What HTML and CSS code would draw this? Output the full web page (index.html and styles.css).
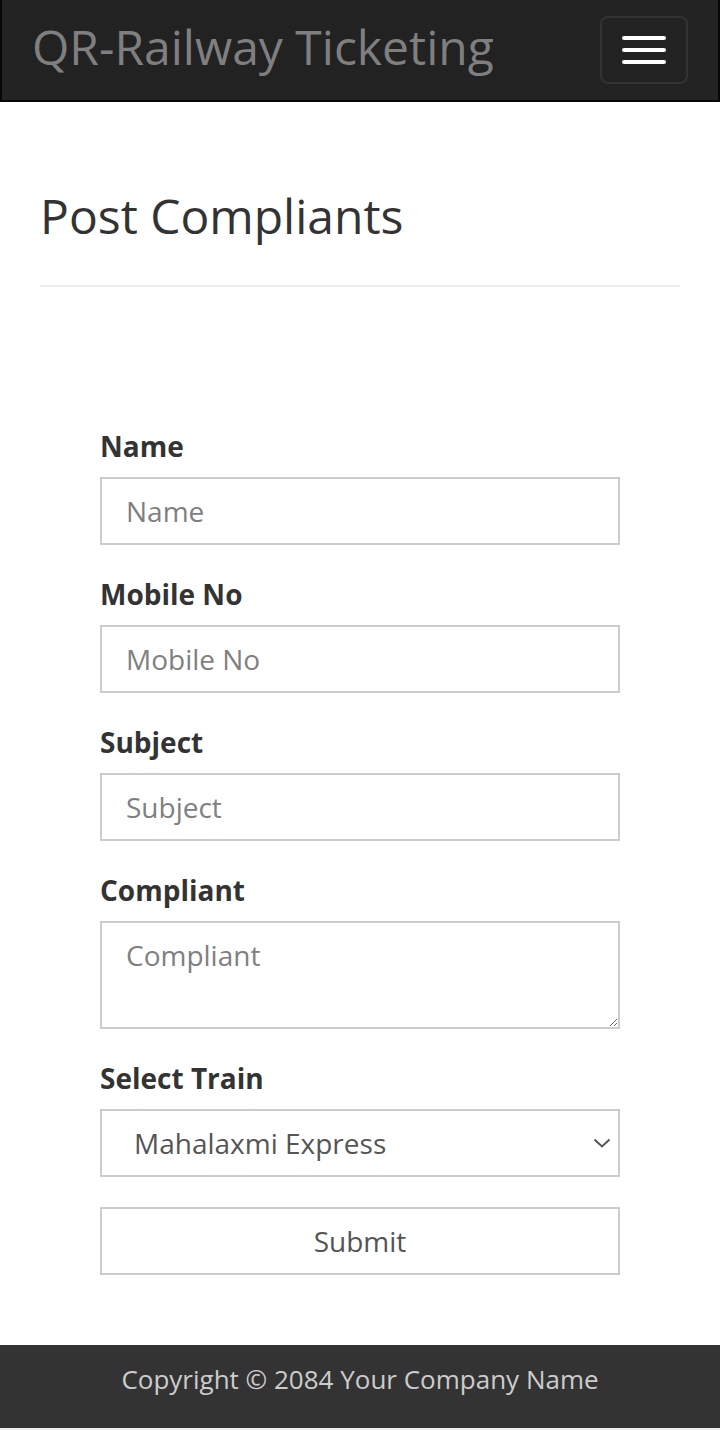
FILE: index.html
```html
<!DOCTYPE html>
<html lang="en">
<head>
<meta charset="utf-8">
<title>Post Compliants</title>
<link rel="stylesheet" href="styles.css">
</head>
<body>
<nav class="navbar">
  <a class="brand" href="#">QR-Railway Ticketing</a>
  <button class="toggle" type="button" aria-label="Toggle navigation">
    <span class="bar"></span>
    <span class="bar"></span>
    <span class="bar"></span>
  </button>
</nav>
<main class="container">
  <h1 class="page-header">Post Compliants</h1>
  <form class="form">
    <div class="group">
      <label class="label" for="name">Name</label>
      <input class="control" id="name" type="text" placeholder="Name">
    </div>
    <div class="group">
      <label class="label" for="mobile">Mobile No</label>
      <input class="control" id="mobile" type="text" placeholder="Mobile No">
    </div>
    <div class="group">
      <label class="label" for="subject">Subject</label>
      <input class="control" id="subject" type="text" placeholder="Subject">
    </div>
    <div class="group">
      <label class="label" for="compliant">Compliant</label>
      <textarea class="control area" id="compliant" placeholder="Compliant"></textarea>
    </div>
    <div class="group">
      <label class="label" for="train">Select Train</label>
      <select class="control select" id="train">
        <option>Mahalaxmi Express</option>
      </select>
    </div>
    <button class="submit" type="button">Submit</button>
  </form>
</main>
<footer class="footer">Copyright © 2084 Your Company Name</footer>
<div class="strip"></div>
</body>
</html>
```
FILE: styles.css
```css
* { box-sizing: border-box; }
html, body { margin: 0; padding: 0; background: #fff; }
body {
  font-family: "Open Sans", "DejaVu Sans", sans-serif;
  color: #333;
  width: 720px;
}
.navbar {
  height: 102px;
  background: #222;
  border: 2px solid #080808;
  border-top: 0;
  display: flex;
  align-items: flex-start;
  justify-content: space-between;
}
.brand {
  font-size: 48px;
  line-height: 50px;
  padding: 22px 0 0 30px;
  color: #7f7f7f;
  text-decoration: none;
  white-space: nowrap;
}
.toggle {
  margin: 16px 30px 0 0;
  width: 88px;
  height: 68px;
  padding: 18px 20px;
  background: transparent;
  border: 2px solid #333;
  border-radius: 8px;
  display: flex;
  flex-direction: column;
  gap: 8px;
}
.bar {
  display: block;
  width: 44px;
  height: 4px;
  border-radius: 2px;
  background: #fff;
}
.container { padding: 0 40px; }
.page-header {
  margin: 86px 0 0;
  font-size: 48px;
  line-height: 56px;
  font-weight: 400;
  color: #333;
  padding-bottom: 41px;
  border-bottom: 2px solid #eee;
}
.form {
  margin: 140px 60px 0;
  display: flex;
  flex-direction: column;
}
.group {
  display: flex;
  flex-direction: column;
  margin-bottom: 30px;
}
.label {
  font-size: 28px;
  line-height: 38px;
  font-weight: 700;
  color: #333;
  margin-bottom: 12px;
}
.control {
  display: block;
  width: 100%;
  height: 68px;
  padding: 0 24px;
  font-family: inherit;
  font-size: 28px;
  color: #555;
  background: #fff;
  border: 2px solid #ccc;
  border-radius: 0;
  outline: none;
}
.control::placeholder { color: #808080; opacity: 1; }
.area {
  height: 108px;
  padding-top: 12px;
  line-height: 40px;
  resize: vertical;
}
.select {
  appearance: none;
  -webkit-appearance: none;
  padding-left: 32px;
  background-image: url("data:image/svg+xml;utf8,<svg xmlns='http://www.w3.org/2000/svg' width='18' height='12' viewBox='0 0 18 12'><path d='M1.5 2.5 L9 9.5 L16.5 2.5' fill='none' stroke='%23555' stroke-width='2'/></svg>");
  background-repeat: no-repeat;
  background-position: right 7px center;
}
.submit {
  height: 68px;
  width: 100%;
  font-family: inherit;
  font-size: 28px;
  color: #555;
  background: #fff;
  border: 2px solid #ccc;
  border-radius: 0;
  margin-bottom: 70px;
}
.footer {
  height: 83px;
  background: #333;
  color: #ccc;
  font-size: 26px;
  line-height: 40px;
  padding-top: 14px;
  text-align: center;
}
.strip { height: 2px; background: #eee; }
```
